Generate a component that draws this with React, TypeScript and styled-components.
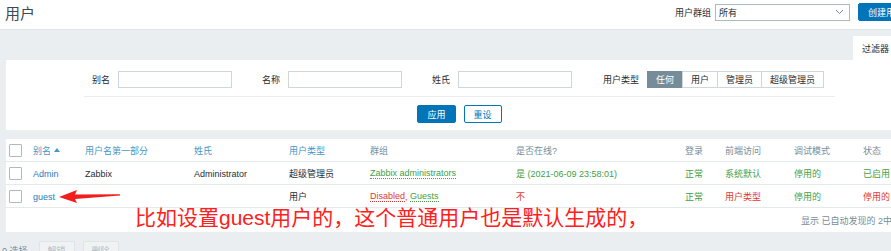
import React from 'react'
import styled, { createGlobalStyle } from 'styled-components';

const GlobalStyle = createGlobalStyle`
  body {
    margin:0;
    background:#ebeef0;
    overflow:hidden;
    font-family:"Liberation Sans", "Noto Sans CJK SC", Arial, sans-serif;
    font-size:9px;
    color:#1f2c33;
  }
  #root {
    width:891px;
    height:251px;
    overflow:hidden;
  }
`

const cols = '24px 52px 109px 95px 81px 146px 169px 40px 69px 69px 1fr';

const App = () => {
  return (
    <Page>
      <GlobalStyle />
      <Header>
        <PageTitle>用户</PageTitle>
        <HeaderControls>
          <SmallLabel>用户群组</SmallLabel>
          <Select>
            <span>所有</span>
            <svg width="9" height="6" viewBox="0 0 9 6">
              <path d="M1 1 L4.5 4.5 L8 1" fill="none" stroke="#768d99" strokeWidth="1" />
            </svg>
          </Select>
          <PrimaryButton>创建用户</PrimaryButton>
        </HeaderControls>
      </Header>

      <Content>
        <TabBar>
          <Tab>过滤器</Tab>
        </TabBar>
        <FilterPanel>
          <FilterRow>
            <FieldLabel>别名</FieldLabel>
            <TextInput />
            <FieldLabel $gap={30}>名称</FieldLabel>
            <TextInput />
            <FieldLabel $gap={30}>姓氏</FieldLabel>
            <TextInput />
            <FieldLabel $gap={31}>用户类型</FieldLabel>
            <Segmented>
              <Segment $active>任何</Segment>
              <Segment>用户</Segment>
              <Segment>管理员</Segment>
              <Segment>超级管理员</Segment>
            </Segmented>
          </FilterRow>
          <FilterActions>
            <PrimaryButton>应用</PrimaryButton>
            <OutlineButton>重设</OutlineButton>
          </FilterActions>
        </FilterPanel>

        <TablePanel>
          <HeadRow>
            <Cell><Check /></Cell>
            <HeadLink>别名 <SortUp /></HeadLink>
            <HeadLink>用户名第一部分</HeadLink>
            <HeadLink>姓氏</HeadLink>
            <HeadLink>用户类型</HeadLink>
            <HeadText>群组</HeadText>
            <HeadText>是否在线?</HeadText>
            <HeadText>登录</HeadText>
            <HeadText>前端访问</HeadText>
            <HeadText>调试模式</HeadText>
            <HeadText>状态</HeadText>
          </HeadRow>
          <Row>
            <Cell><Check /></Cell>
            <Link>Admin</Link>
            <Cell>Zabbix</Cell>
            <Cell>Administrator</Cell>
            <Cell>超级管理员</Cell>
            <Cell><Dotted $color="#429e47">Zabbix administrators</Dotted></Cell>
            <Cell $color="#429e47">是 (2021-06-09 23:58:01)</Cell>
            <Cell $color="#429e47">正常</Cell>
            <Cell $color="#429e47">系统默认</Cell>
            <Cell $color="#429e47">停用的</Cell>
            <Cell $color="#429e47">已启用</Cell>
          </Row>
          <Row>
            <Cell><Check /></Cell>
            <Link>guest</Link>
            <Cell></Cell>
            <Cell></Cell>
            <Cell>用户</Cell>
            <Cell>
              <Dotted $color="#e33734">Disabled</Dotted>
              <Colored $color="#e33734">,&nbsp;</Colored>
              <Dotted $color="#429e47">Guests</Dotted>
            </Cell>
            <Cell $color="#e33734">不</Cell>
            <Cell $color="#429e47">正常</Cell>
            <Cell $color="#e33734">用户类型</Cell>
            <Cell $color="#429e47">停用的</Cell>
            <Cell $color="#e33734">停用的</Cell>
          </Row>
          <TableFooter>显示 已自动发现的 2中的2</TableFooter>

          <Arrow width="66" height="20" viewBox="0 0 66 20">
            <path d="M1 11 L19 4 L17 8.6 L62 8.2 L62 9.6 L17 13 L19 17 Z" fill="#f21d1d" />
          </Arrow>
          <Note>比如设置guest用户的，这个普通用户也是默认生成的，</Note>
        </TablePanel>

        <BottomBar>
          <span>0 选择</span>
          <GhostButton>解锁</GhostButton>
          <GhostButton>删除</GhostButton>
        </BottomBar>
      </Content>
    </Page>
  )
}

export default App;

const Page = styled.div`
  width:920px;
`

const Header = styled.div`
  display:flex;
  align-items:center;
  justify-content:space-between;
  height:29px;
  background:#fff;
  border-bottom:1px solid #dfe4e7;
  padding:0 6px 0 5px;
`

const PageTitle = styled.div`
  font-size:15px;
  color:#3d4a52;
  margin-top:-4px;
`

const HeaderControls = styled.div`
  display:flex;
  align-items:center;
  margin-top:-5px;
`

const SmallLabel = styled.span`
  color:#1f2c33;
  margin-right:4px;
`

const Select = styled.div`
  box-sizing:border-box;
  width:135px;
  height:17px;
  border:1px solid #acbbc2;
  background:#fff;
  display:flex;
  align-items:center;
  justify-content:space-between;
  padding:0 5px 0 3px;
  margin-right:8px;
`

const PrimaryButton = styled.div`
  box-sizing:border-box;
  height:18px;
  padding:0 9px;
  display:flex;
  align-items:center;
  background:#0275b8;
  border:1px solid #0275b8;
  border-radius:2px;
  color:#fff;
`

const OutlineButton = styled(PrimaryButton)`
  background:#fff;
  color:#0275b8;
`

const GhostButton = styled.div`
  box-sizing:border-box;
  height:18px;
  width:36px;
  display:flex;
  align-items:center;
  justify-content:center;
  background:#f0f2f3;
  border:1px solid #dfe4e7;
  border-radius:2px;
  color:#acbbc2;
`

const Content = styled.div`
  padding:6px 6px 0 6px;
`

const TabBar = styled.div`
  display:flex;
  justify-content:flex-end;
  padding-right:16px;
`

const Tab = styled.div`
  background:#fff;
  height:24px;
  padding:0 9px;
  display:flex;
  align-items:center;
  color:#1f2c33;
`

const FilterPanel = styled.div`
  background:#fff;
  height:70px;
  box-sizing:border-box;
  padding-top:11px;
`

const FilterRow = styled.div`
  display:flex;
  align-items:center;
  margin-left:78px;
  width:751px;
  padding-left:8px;
  padding-bottom:8px;
  box-sizing:border-box;
  border-bottom:1px solid #ebeef0;
`

const FieldLabel = styled.span<{ $gap?: number }>`
  margin-left:${p => p.$gap || 0}px;
  margin-right:8px;
  white-space:nowrap;
`

const TextInput = styled.div`
  box-sizing:border-box;
  width:114px;
  height:17px;
  border:1px solid #cfd6da;
  background:#fff;
`

const Segmented = styled.div`
  display:flex;
  margin-left:1px;
`

const Segment = styled.div<{ $active?: boolean }>`
  box-sizing:border-box;
  height:17px;
  padding:0 8px;
  display:flex;
  align-items:center;
  border:1px solid ${p => (p.$active ? '#768d99' : '#cfd6da')};
  margin-left:-1px;
  background:${p => (p.$active ? '#768d99' : '#fff')};
  color:${p => (p.$active ? '#fff' : '#1f2c33')};
`

const FilterActions = styled.div`
  display:flex;
  justify-content:center;
  gap:8px;
  width:751px;
  margin-left:78px;
  margin-top:8px;
`

const TablePanel = styled.div`
  position:relative;
  background:#fff;
  margin-top:9px;
`

const HeadRow = styled.div`
  display:grid;
  grid-template-columns:${cols};
  align-items:center;
  height:22px;
  padding-left:3px;
  border-bottom:1px solid #e4e9eb;
`

const Row = styled(HeadRow)`
  height:21px;
  padding-top:1px;
`

const Cell = styled.div<{ $color?: string }>`
  display:flex;
  align-items:center;
  white-space:nowrap;
  color:${p => p.$color || '#1f2c33'};
`

const HeadLink = styled(Cell)`
  color:#4796c4;
`

const HeadText = styled(Cell)`
  color:#768d99;
`

const Link = styled(Cell)`
  color:#2b7cbd;
`

const Colored = styled.span<{ $color: string }>`
  color:${p => p.$color};
  white-space:pre;
`

const Dotted = styled(Colored)`
  border-bottom:1px dotted ${p => p.$color};
  line-height:10px;
`

const Check = styled.span`
  display:block;
  box-sizing:border-box;
  width:13px;
  height:13px;
  border:1px solid #acbbc2;
  border-radius:1px;
  background:#fff;
`

const SortUp = styled.span`
  display:inline-block;
  margin-left:3px;
  width:0;
  height:0;
  border-left:3.5px solid transparent;
  border-right:3.5px solid transparent;
  border-bottom:4px solid #4796c4;
`

const TableFooter = styled.div`
  height:24px;
  display:flex;
  align-items:center;
  justify-content:flex-end;
  padding-right:8px;
  color:#768d99;
`

const Arrow = styled.svg`
  position:absolute;
  left:52px;
  top:47px;
`

const Note = styled.div`
  position:absolute;
  left:129px;
  top:67px;
  font-size:21px;
  line-height:24px;
  color:#ff2020;
  white-space:nowrap;
`

const BottomBar = styled.div`
  display:flex;
  align-items:center;
  gap:8px;
  margin-left:-4px;
  margin-top:9px;
  color:#768d99;
  span {
    margin-right:3px;
  }
`
